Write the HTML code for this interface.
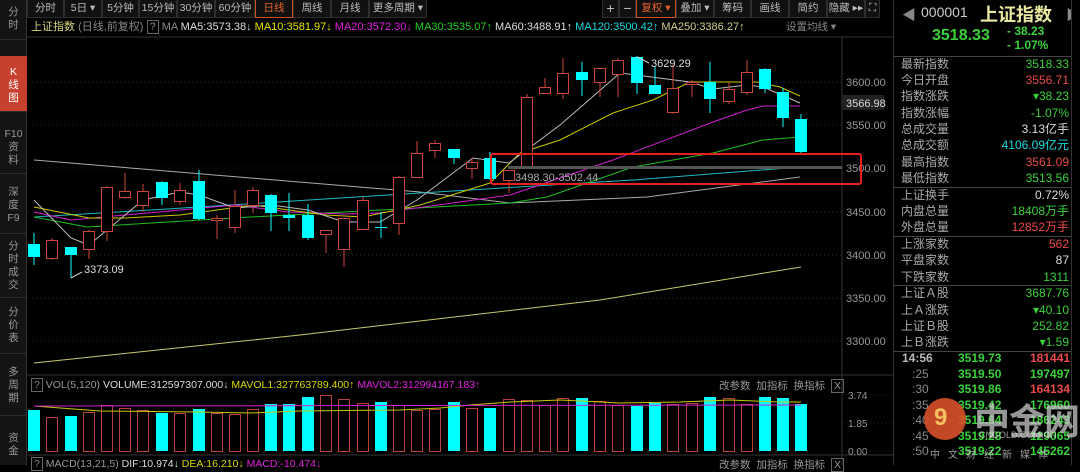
<!DOCTYPE html>
<html><head><meta charset="utf-8">
<style>
*{margin:0;padding:0;box-sizing:border-box}
body{width:1080px;height:465px;background:#000;overflow:hidden;position:relative;font-family:"Liberation Sans","Noto Sans CJK SC",sans-serif;color:#aaa;font-size:11px}
.abs{position:absolute;white-space:nowrap}
#side{position:absolute;left:0;top:0;width:27px;height:465px;background:#141414;border-right:1px solid #333}
.st{position:absolute;left:0;width:27px;text-align:center;font-size:10.5px;line-height:13px;color:#999;border-bottom:1px solid #2c2c2c;overflow:hidden}
.tabs{position:absolute;top:0;height:18px;display:flex}
.tab{height:18px;line-height:17px;font-size:10.5px;color:#bbb;background:#111;border:1px solid #2e2e2e;border-top:none;padding:0;text-align:center;white-space:nowrap;overflow:hidden}
.rp{position:absolute;left:893px;top:0;width:187px;height:465px;background:#000;border-left:1px solid #333}
.row{position:absolute;left:7px;width:168px;font-size:12px;height:16px;line-height:16px;color:#aaa}
.row span{position:absolute;right:0}
.g{color:#3ad13a}.r{color:#ea4a4a}.w{color:#ddd}.c{color:#1ad9e0}
.sep{position:absolute;left:0;width:178px;border-top:1px solid #444}
</style></head><body>
<div id="side">
 <div class="st" style="top:4px;height:36px;padding-top:2px">分<br>时</div>
 <div class="st" style="top:56px;height:56px;padding-top:10px;background:#c8402e;color:#fff">K<br>线<br>图</div>
 <div class="st" style="top:124px;height:50px;padding-top:4px">F10<br>资<br>料</div>
 <div class="st" style="top:182px;height:52px;padding-top:4px">深<br>度<br>F9</div>
 <div class="st" style="top:240px;height:58px">分<br>时<br>成<br>交</div>
 <div class="st" style="top:306px;height:48px">分<br>价<br>表</div>
 <div class="st" style="top:366px;height:50px">多<br>周<br>期</div>
 <div class="st" style="top:432px;height:40px;border:none">资<br>金</div>
</div>
<div class="tabs" style="left:27px">
 <div class="tab" style="width:37px">分时</div><div class="tab" style="width:38px">5日 ▾</div><div class="tab" style="width:37px">5分钟</div><div class="tab" style="width:38px">15分钟</div><div class="tab" style="width:38px">30分钟</div><div class="tab" style="width:40px">60分钟</div><div class="tab" style="width:38px;color:#e5622b;border:1px solid #c8501e;border-top:none">日线</div><div class="tab" style="width:38px">周线</div><div class="tab" style="width:38px">月线</div><div class="tab" style="width:58px">更多周期 ▾</div>
</div>
<div class="tabs" style="left:602px">
 <div class="tab" style="width:17px;font-size:14px">+</div><div class="tab" style="width:17px;font-size:14px">−</div><div class="tab" style="width:40px;color:#e5622b;border:1px solid #c8501e;border-top:none">复权 ▾</div><div class="tab" style="width:38px">叠加 ▾</div><div class="tab" style="width:37px">筹码</div><div class="tab" style="width:38px">画线</div><div class="tab" style="width:38px">简约</div><div class="tab" style="width:38px">隐藏 ▸▸</div><div class="tab" style="width:15px">⛶</div>
</div>
<div class="abs" style="left:31px;top:20px;font-size:11px;line-height:14px">
<span style="color:#d8d880">上证指数</span> <span style="color:#888">(日线,前复权)</span> <span style="color:#888;border:1px solid #666;padding:0 2px">?</span> <span style="color:#888">MA</span> <span class="w">MA5:3573.38↓</span> <span style="color:#e6e600">MA10:3581.97↓</span> <span style="color:#e020e0">MA20:3572.30↓</span> <span style="color:#20d020">MA30:3535.07↑</span> <span class="w">MA60:3488.91↑</span> <span class="c">MA120:3500.42↑</span> <span style="color:#d0d090">MA250:3386.27↑</span>
</div>
<div class="abs" style="left:786px;top:20px;color:#888;line-height:14px;font-size:10.5px;background:#000">设置均线 ▾</div>
<svg class="abs" style="left:27px;top:0" width="866" height="465" id="sv"></svg>
<div class="rp">
 <div class="abs" style="left:8px;top:5px;font-size:14px;color:#888">◀</div>
 <div class="abs" style="left:27px;top:4px;font-size:14px;color:#ccc">000001</div>
 <div class="abs" style="left:86px;top:1px;font-size:18px;color:#e8e8a0;font-weight:bold">上证指数</div>
 <div class="abs" style="left:172px;top:5px;font-size:14px;color:#888">▶</div>
 <div class="abs g" style="left:38px;top:27px;font-size:16px;font-weight:bold">3518.33</div>
 <div class="abs g" style="left:113px;top:24px;font-size:12px;font-weight:bold">- 38.23</div>
 <div class="abs g" style="left:113px;top:38px;font-size:12px;font-weight:bold">- 1.07%</div>
 <div class="sep" style="top:56px"></div>
 <div class="row" style="top:56px">最新指数<span class="g">3518.33</span></div>
 <div class="row" style="top:72px">今日开盘<span class="r">3556.71</span></div>
 <div class="row" style="top:88px">指数涨跌<span class="g">▾38.23</span></div>
 <div class="row" style="top:105px">指数涨幅<span class="g">-1.07%</span></div>
 <div class="row" style="top:121px">总成交量<span class="w">3.13亿手</span></div>
 <div class="row" style="top:137px">总成交额<span class="c">4106.09亿元</span></div>
 <div class="row" style="top:154px">最高指数<span class="r">3561.09</span></div>
 <div class="row" style="top:170px">最低指数<span class="g">3513.56</span></div>
 <div class="sep" style="top:187px"></div>
 <div class="row" style="top:187px">上证换手<span class="w">0.72%</span></div>
 <div class="row" style="top:203px">内盘总量<span class="g">18408万手</span></div>
 <div class="row" style="top:219px">外盘总量<span class="r">12852万手</span></div>
 <div class="sep" style="top:236px"></div>
 <div class="row" style="top:236px">上涨家数<span class="r">562</span></div>
 <div class="row" style="top:252px">平盘家数<span class="w">87</span></div>
 <div class="row" style="top:269px">下跌家数<span class="g">1311</span></div>
 <div class="sep" style="top:285px"></div>
 <div class="row" style="top:285px">上证Ａ股<span class="g">3687.76</span></div>
 <div class="row" style="top:302px">上Ａ涨跌<span class="g">▾40.10</span></div>
 <div class="row" style="top:318px">上证Ｂ股<span class="g">252.82</span></div>
 <div class="row" style="top:334px">上Ｂ涨跌<span class="g">▾1.59</span></div>
 <div class="sep" style="top:351px"></div>
 <div class="abs" style="left:8px;top:351px;font-size:12px;line-height:15.5px;color:#bbb;font-weight:bold">14:56<br><span style="color:#888;font-weight:normal">&nbsp;&nbsp;&nbsp;:25<br>&nbsp;&nbsp;&nbsp;:30<br>&nbsp;&nbsp;&nbsp;:35<br>&nbsp;&nbsp;&nbsp;:40<br>&nbsp;&nbsp;&nbsp;:45<br>&nbsp;&nbsp;&nbsp;:50</span></div>
 <div class="abs g" style="left:64px;top:351px;font-size:12px;line-height:15.5px;font-weight:bold">3519.73<br>3519.50<br>3519.86<br>3519.42<br>3519.64<br>3519.28<br>3519.22</div>
 <div class="abs" style="left:136px;top:351px;font-size:12px;line-height:15.5px;font-weight:bold"><span class="r">181441</span><br><span class="g">197497</span><br><span class="r">164134</span><br><span class="g">176960</span><br><span class="g">186243</span><br><span class="g">129065</span><br><span class="g">145262</span></div>
 <div class="abs" style="left:177px;top:0;width:10px;height:465px;background:#000;border-left:1px solid #333"></div>
 <div class="abs" style="left:30px;top:398px;width:42px;height:42px;border-radius:50%;background:#d8502a;opacity:.9"></div>
 <div class="abs" style="left:40px;top:404px;font-size:24px;color:#f6c060;font-weight:bold">9</div>
 <div class="abs" style="left:80px;top:393px;font-size:36px;color:rgba(200,200,200,.75);font-weight:bold;letter-spacing:-1px">中金网</div>
 <div class="abs" style="left:85px;top:430px;font-size:9px;color:rgba(220,220,220,.7)">CNGOLD.COM.CN</div>
 <div class="abs" style="left:36px;top:446px;font-size:10px;color:rgba(220,220,220,.7);letter-spacing:8px">中文财经新媒体</div>
</div>
<script>
var s='',X=-27;
function L(x1,y1,x2,y2,c,w,d){s+='<line x1="'+(x1+X)+'" y1="'+y1+'" x2="'+(x2+X)+'" y2="'+y2+'" stroke="'+c+'" stroke-width="'+(w||1)+'"'+(d?' stroke-dasharray="'+d+'"':'')+'/>';}
function P(pts,c){s+='<polyline fill="none" stroke="'+c+'" stroke-width="1" points="'+pts.map(function(p){return (p[0]+X)+','+p[1]}).join(' ')+'"/>';}
function T(x,y,t,c,sz,a){s+='<text x="'+(x+X)+'" y="'+y+'" fill="'+c+'" font-size="'+(sz||11)+'"'+(a?' text-anchor="'+a+'"':'')+'>'+t+'</text>';}
L(27,37,893,37,'#333');L(842,37,842,465,'#333');L(27,375,893,375,'#333');L(27,455,893,455,'#333');
[82,125,168,212,255,298,341].forEach(function(y){L(28,y,842,y,'#2a2a2a',1,'1,3')});
[['3600.00',82],['3550.00',125],['3500.00',168],['3450.00',212],['3400.00',255],['3350.00',298],['3300.00',341]].forEach(function(a){T(846,a[1]+4,a[0],'#999',11)});
s+='<rect x="'+(842+X)+'" y="95" width="42" height="15" fill="#222"/>';T(846,107,'3566.98','#ddd',11);
P([[34,363],[300,335],[600,300],[801,267]],'#c8c870');
P([[34,160],[420,192],[510,203],[647,197],[800,177]],'#aaa');
P([[34,217],[167,209],[420,193],[633,180],[800,167]],'#20b8c0');
P([[34,217],[87,227],[233,218],[380,210],[510,203],[547,197],[633,167],[713,153],[763,140],[800,137]],'#20c020');
P([[34,212],[71,220],[125,215],[180,210],[235,205],[289,212],[344,214],[380,213],[510,195],[613,160],[713,122],[747,110],[763,106],[800,106]],'#d020d0');
P([[34,207],[89,218],[125,218],[180,215],[217,210],[253,205],[289,210],[326,215],[363,217],[420,205],[490,183],[520,153],[560,140],[613,113],[653,100],[690,82],[757,82],[780,87],[800,96]],'#c8c800');
P([[34,200],[71,238],[89,245],[107,230],[143,200],[180,192],[199,195],[235,208],[271,205],[308,210],[344,222],[380,222],[417,200],[473,158],[509,163],[560,125],[620,73],[690,82],[713,89],[747,85],[763,87],[800,103]],'#bbb');
var C=[[34,'c',244,257,233,265],[52,'r',240,258,238,260],[71,'c',247,255,247,278],[89,'r',231,249,230,259],[107,'r',187,231,186,241],[125,'r',191,197,173,199],[143,'r',191,205,184,212],[162,'c',182,198,181,205],[180,'r',190,201,183,205],[199,'c',181,219,170,220],[217,'r',218,220,215,239],[235,'r',206,227,190,233],[253,'r',190,205,187,213],[271,'c',195,213,194,231],[289,'c',215,218,193,231],[308,'c',215,238,204,240],[326,'r',230,234,230,253],[344,'r',218,249,218,267],[363,'r',200,229,197,229],[381,'c',227,228,212,238],[399,'r',177,223,176,235],[417,'r',153,177,141,177],[435,'r',143,150,140,158],[454,'c',149,158,149,164],[472,'r',162,168,158,179],[490,'c',158,179,152,180],[509,'r',170,180,170,193],[527,'r',97,167,94,167],[545,'r',87,93,78,93],[563,'r',73,93,58,99],[582,'c',72,80,62,96],[600,'r',68,82,68,97],[618,'r',60,74,58,97],[637,'c',57,83,56,94],[655,'c',85,94,67,94],[673,'r',88,112,65,114],[692,'r',82,84,80,97],[710,'c',82,99,62,113],[729,'r',89,101,82,104],[747,'r',72,92,60,95],[765,'c',69,89,68,93],[783,'c',92,118,88,127],[801,'c',119,152,114,155]];
var V=[410,417,416,412,405,408,410,413,413,409,413,414,409,404,404,397,395,399,403,402,405,410,409,402,408,408,399,400,405,398,398,401,405,406,403,404,403,397,398,404,397,398,404];
C.forEach(function(k,i){var x=k[0],col=k[1]=='c'?'#00ffff':'#c8463e';
 L(x,k[4],x,k[5],col);
 if(k[1]=='c')s+='<rect x="'+(x-6+X)+'" y="'+k[2]+'" width="12" height="'+Math.max(1,k[3]-k[2])+'" fill="#00ffff"/>';
 else s+='<rect x="'+(x-5.5+X)+'" y="'+(k[2]+.5)+'" width="11" height="'+Math.max(1,k[3]-k[2])+'" fill="#000" stroke="#c8463e"/>';
 var t=V[i];
 if(k[1]=='c')s+='<rect x="'+(x-6+X)+'" y="'+t+'" width="12" height="'+(451-t)+'" fill="#00ffff"/>';
 else s+='<rect x="'+(x-5.5+X)+'" y="'+(t+.5)+'" width="11" height="'+(451-t)+'" fill="none" stroke="#b84040"/>';
});
P([[34,406],[100,411],[200,412],[250,413],[300,411],[400,410],[440,408],[470,405],[510,402],[560,400],[620,403],[680,402],[730,400],[780,402],[801,402]],'#c8c800');
P([[34,406],[801,405]],'#d020d0');
s+='<rect x="'+(508+X)+'" y="166" width="334" height="3" fill="#555"/>';
s+='<rect x="'+(491+X)+'" y="154" width="370" height="30" fill="none" stroke="#e8201c" stroke-width="2" rx="2"/>';
T(515,181,'3498.30-3502.44','#aaa',11);
T(651,67,'3629.29','#ddd',11);L(637,57,649,63,'#ccc');
T(84,273,'3373.09','#ddd',11);L(71,278,82,272,'#ccc');
[['3.74',399],['1.85',427],['0.00',455]].forEach(function(a){T(848,a[1],a[0],'#999',10);L(842,a[1]-4,893,a[1]-4,'#2a2a2a',1,'1,3')});
document.getElementById('sv').innerHTML=s;
</script>
<div class="abs" style="left:31px;top:378px;font-size:10.5px;line-height:14px"><span style="color:#888;border:1px solid #666;padding:0 2px">?</span> <span style="color:#999">VOL(5,120)</span> <span class="w">VOLUME:312597307.000↓</span> <span style="color:#d8d800">MAVOL1:327763789.400↑</span> <span style="color:#e020e0">MAVOL2:312994167.183↑</span></div>
<div class="abs" style="left:719px;top:378px;font-size:10.5px;color:#999">改参数 &nbsp;加指标 &nbsp;换指标 &nbsp;<span style="border:1px solid #666;padding:0 2px">X</span></div>
<div class="abs" style="left:31px;top:457px;font-size:10.5px;line-height:14px"><span style="color:#888;border:1px solid #666;padding:0 2px">?</span> <span style="color:#999">MACD(13,21,5)</span> <span class="w">DIF:10.974↓</span> <span style="color:#d8d800">DEA:16.210↓</span> <span style="color:#e020e0">MACD:-10.474↓</span></div>
<div class="abs" style="left:719px;top:457px;font-size:10.5px;color:#999">改参数 &nbsp;加指标 &nbsp;换指标 &nbsp;<span style="border:1px solid #666;padding:0 2px">X</span></div>
</body></html>
